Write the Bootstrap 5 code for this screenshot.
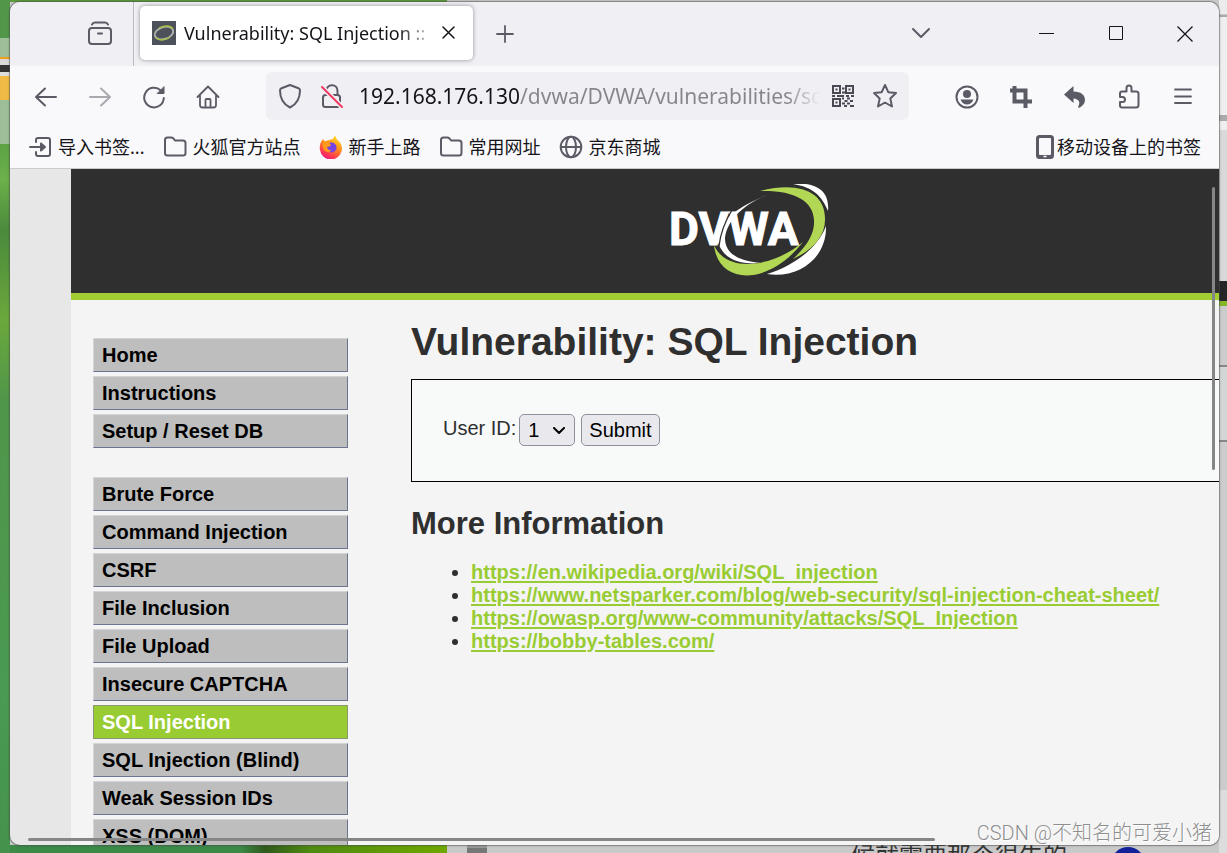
<!DOCTYPE html>
<html lang="zh-CN">
<head>
<meta charset="utf-8">
<meta name="viewport" content="width=device-width, initial-scale=1">
<title>Vulnerability: SQL Injection :: DVWA</title>
<link href="https://cdn.jsdelivr.net/npm/bootstrap@5.3.0/dist/css/bootstrap.min.css" rel="stylesheet">
<style>
:root { --ink:#5b5b66; --green:#9c3; }
body { font-family:"Noto Sans","Noto Sans CJK SC",sans-serif; color:#15141a; background:#c9c9c9; padding:2px 8px 8px 10px; }
button { color:inherit; }
svg { display:block; flex:none; }
.ico { fill:none; stroke:currentColor; stroke-width:2; stroke-linecap:round; stroke-linejoin:round; }
.tool { border:0; background:none; padding:0; display:flex; align-items:center; justify-content:center; color:var(--ink); flex:none; }
/* desktop behind the window */
.desk { inset:0; z-index:0; }
.desk-left { top:0; bottom:0; left:0; width:10px; background:linear-gradient(#52964a 0 38px,#9dbf98 38px 57px,#f0a020 57px 59px,#d8d8d8 59px 65px,#333 65px 72px,#ddd 72px 76px,#f0bb45 76px 100px,#9dbf98 100px 144px,#5da345 144px,#6bb04a 180px,#4b8a3c 230px,#6ba83c 320px,#50964a 400px,#4a9a52 700px,#45924c); }
.desk-top { top:0; left:0; width:447px; height:2px; background:#5c9b3b; }
.desk-bottom { bottom:0; left:0; width:447px; height:8px; background:linear-gradient(90deg,#3b8a48 0 240px,#2f5a1c 265px,#4f8a12 310px,#6fa800 447px); }
.desk-right { top:0; right:0; bottom:0; width:8px; background:linear-gradient(#ececec 0 14px,#aaa 15px 17px,#eee 17px 115px,#aaa 115px 121px,#eee 121px 130px,#d9d9d9 130px 281px,#262626 281px 301px,#86b52a 301px 306px,#ccc 306px 365px,#888 365px 367px,#d2d6d4 367px 440px,#888 440px 442px,#ccc 442px 790px,#ddd 790px); }
.desk-text { left:851px; top:843px; font-size:24px; line-height:24px; color:#333; white-space:nowrap; }
.desk-ball { left:1111px; top:847px; width:34px; height:34px; border-radius:50%; background:#12209a; }
.desk-chip { left:467px; top:845px; width:20px; height:8px; background:#777; border-top:3px solid #999; }
/* window */
.win { border-radius:10px; z-index:1; min-height:0; background:#e7e7e7; box-shadow:0 0 0 1px rgba(90,90,90,.45),0 0 3px rgba(0,0,0,.4); }
.tabs-row { height:64px; background:#f0eff4; }
.view-cell { width:124px; padding-left:56px; border-right:1px solid #b9b9bf; }
.tab-card { width:333px; height:54px; margin:4px 0 6px 6px; padding:0 12px; border-radius:5px; background:#fff; box-shadow:0 0 4px rgba(0,0,0,.4); }
.tab-name { font-size:18px; margin-left:8px; -webkit-mask-image:linear-gradient(90deg,#000 215px,transparent 252px); mask-image:linear-gradient(90deg,#000 215px,transparent 252px); }
.w69 { width:69px; color:#15141a; }
.nav-row { height:54px; padding:0 9px; background:#f9f9fb; }
.nav-row .tool { width:54px; }
.url-box { height:48px; margin:6px 31px 0; padding:0 3px; border-radius:6px; background:#f0eff4; }
.url-box .tool { width:42px; }
.url-box input { border:0; outline:0; padding:0; margin-left:6px; width:0; font-size:21px; height:40px; color:transparent; background:linear-gradient(90deg,#15141a 161px,#85858c 161px,#85858c calc(100% - 36px),#f0eff4 calc(100% - 2px)); -webkit-background-clip:text; background-clip:text; }
.marks { height:49px; padding:6px 18px 0 19px; gap:19px; background:#f9f9fb; border-bottom:1px solid #ccc; font-size:18px; line-height:24px; }
.marks a { color:#15141a; text-decoration:none; display:flex; align-items:center; gap:5px; white-space:nowrap; }
.marks svg { color:var(--ink); }
/* page */
.view { font-family:"Liberation Sans",Arial,sans-serif; font-size:20px; line-height:23px; color:#2f2f2f; min-height:0; }
.sheet { margin-left:61px; width:112%; min-height:100%; background:#f4f4f4; }
.banner { height:131px; padding-top:15px; background:#2f2f2f; border-bottom:7px solid #a1cc33; }
.side { width:255px; margin:38px 63px 0 22px; flex:none; }
.side ul { margin:0 0 29px; display:flex; flex-direction:column; gap:4px; }
.side a { display:block; height:34px; padding:5px 8px; border:1px solid; border-color:#d4d4d4 #6b7590 #6b7590 #d4d4d4; background:#bebebe; color:#000; font-weight:bold; line-height:22px; text-decoration:none; }
.side a.here { background:var(--green); color:#fff; border-color:#8a9a70; }
h1 { font-size:39px; line-height:44px; font-weight:bold; margin:20px 0 15px; }
h2 { font-size:31px; line-height:36px; font-weight:bold; margin:24px 0 19px; }
.query { height:103px; padding:34px 31px; background:#f8faf9; border:1px solid #000; }
.query label { padding-top:3px; }
.query select, .query button { height:32px; border:1px solid #8f8f9d; border-radius:5px; background-color:#e9e9ed; color:#000; font-size:20px; line-height:24px; padding:0 7px; }
.query select { width:56px; margin:0 6px 0 3px; padding:0 8px; appearance:none; }
.pick svg { right:14px; top:13px; pointer-events:none; }
.links { padding-left:60px; margin:0; }
.links a { color:var(--green); font-weight:bold; text-decoration-thickness:2px; text-underline-offset:2px; }
.vbar { right:4px; top:18px; width:3px; height:283px; background:#868686; border-radius:2px; }
.hbar { left:18px; bottom:4px; width:75%; height:3px; background:#868686; border-radius:2px; }
.stamp { right:7px; bottom:0; font:300 20px/24px Roboto,"Noto Sans CJK SC",sans-serif; color:#8e8e8e; text-shadow:1px 1px 0 #fff; }
</style>
</head>
<body class="vh-100 overflow-hidden position-relative d-flex flex-column">
<div class="desk position-absolute overflow-hidden" aria-hidden="true">
  <div class="desk-top position-absolute"></div>
  <div class="desk-bottom position-absolute"></div>
  <div class="desk-left position-absolute"></div>
  <div class="desk-right position-absolute"></div>
  <div class="desk-chip position-absolute"></div>
  <div class="desk-text position-absolute">候就需要那个很牛的</div>
  <div class="desk-ball position-absolute"></div>
</div>

<div class="win position-relative flex-grow-1 d-flex flex-column overflow-hidden">
  <header class="tabs-row d-flex align-items-stretch flex-shrink-0">
    <div class="view-cell d-flex align-items-center">
      <button class="tool" style="width:68px" aria-label="Firefox View"><svg class="ico" width="26" height="26" viewBox="0 0 26 26"><rect x="2" y="7" width="22" height="16" rx="3"/><path d="M5 3.500q1-2 3-2h10q2 0 3 2M11 12.500h4"/></svg></button>
    </div>
    <div class="tab-card d-flex align-items-center">
      <svg width="24" height="24" viewBox="0 0 24 24"><rect width="24" height="24" fill="#4d525a"/><g fill="none" transform="rotate(-18 12 12)"><ellipse cx="12" cy="12" rx="9.500" ry="6" stroke="#b4b8b4" stroke-width="1.800"/><path d="M9 5.800c6-1 12 1 12.500 5M3 14c2 4 8 5.500 13 4" stroke="#a5bd45" stroke-width="1.500"/></g></svg>
      <span class="tab-name flex-grow-1 text-nowrap overflow-hidden">Vulnerability: SQL Injection :: </span>
      <button class="tool" style="color:#15141a" aria-label="Close tab"><svg class="ico" width="24" height="24" viewBox="0 0 24 24"><path d="M6 6l11 11M17 6L6 17" stroke-width="1.500"/></svg></button>
    </div>
    <button class="tool ms-3" style="width:32px" aria-label="New tab"><svg class="ico" width="20" height="20" viewBox="0 0 20 20"><path d="M10 2v16M2 10h16" stroke-width="1.800"/></svg></button>
    <button class="tool w69 ms-auto" style="margin-right:57px;color:var(--ink)" aria-label="List all tabs"><svg class="ico" width="20" height="20" viewBox="0 0 20 20"><path d="M2 5l8 8 8-8"/></svg></button>
    <button class="tool w69" aria-label="Minimize"><svg width="16" height="16"><path d="M0 7.500h15" stroke="currentColor"/></svg></button>
    <button class="tool w69" aria-label="Maximize"><svg width="16" height="16"><path d="M1.500.5h13v13h-13z" fill="none" stroke="currentColor"/></svg></button>
    <button class="tool w69" aria-label="Close"><svg width="16" height="16"><path d="M.5.5l15 15M15.500.5l-15 15" stroke="currentColor" stroke-width="1.300"/></svg></button>
  </header>

  <nav class="nav-row d-flex flex-shrink-0" aria-label="Navigation">
    <button class="tool pt-2" aria-label="Back"><svg class="ico" width="24" height="24" viewBox="0 0 24 24"><path d="M22 12H2M11 3.500L2 12l9 8.500"/></svg></button>
    <button class="tool pt-2 opacity-50" aria-label="Forward"><svg class="ico" width="24" height="24" viewBox="0 0 24 24"><path d="M2 12h20M13 3.500L22 12l-9 8.500"/></svg></button>
    <button class="tool pt-2" aria-label="Reload"><svg class="ico" width="24" height="24" viewBox="0 0 24 24"><path d="M21.800 13a9.800 9.800 0 1 1-3-7.500"/><path d="M15.500 8.500h6.500V2z" fill="currentColor" stroke-width="1"/></svg></button>
    <button class="tool pt-2" aria-label="Home"><svg class="ico" width="24" height="24" viewBox="0 0 24 24"><path d="M1.500 12L12 1.500 22.500 12M4 10v10q0 2.500 2.500 2.500h11q2.500 0 2.500-2.500V10M9.500 22v-7q0-1 1-1h3q1 0 1 1v7" stroke-width="1.800"/></svg></button>
    <div class="url-box flex-grow-1 d-flex align-items-center">
      <button class="tool" aria-label="Tracking protection"><svg class="ico" width="24" height="26" viewBox="0 0 24 26"><path d="M12 2l8.500 3.200q1.500.6 1.500 2C22 15 19 21 12 24.500 5 21 2 15 2 7.200q0-1.400 1.500-2z"/></svg></button>
      <button class="tool" aria-label="Connection is not secure"><svg class="ico" width="24" height="26" viewBox="0 0 24 26"><rect x="3" y="12" width="17" height="12" rx="2.500"/><path d="M6.500 7c1-6.500 11-6.500 11 1v4"/><path d="M2 4l20 20" stroke="#f0eff4" stroke-width="5"/><path d="M2 4l20 20" stroke="#f0385f"/></svg></button>
      <input class="flex-grow-1" type="text" aria-label="Address" value="192.168.176.130/dvwa/DVWA/vulnerabilities/sqli/">
      <button class="tool" aria-label="QR code"><svg width="22" height="22" viewBox="0 0 22 22" fill="none" stroke="#4a4a55" stroke-width="2"><path d="M1 1h7v7H1zM14 1h7v7h-7zM1 14h7v7H1z"/><path d="M3.500 4.500h2M16.500 4.500h2M3.500 17.500h2M10 3.500h2.500M10 7.500h3M0 11h3M5 11h7M14 11h3M19 11h3M10 13.500h2M15 13.500h3M12.500 16h3M18 16h3M10 18.500h3M15 18.500h3M12 21h3M18 21h4"/></svg></button>
      <button class="tool" aria-label="Bookmark this page"><svg class="ico" width="26" height="26" viewBox="0 0 26 26"><path d="M13 2l3.300 7.200 7.700.9-5.700 5.300 1.700 8.100-7-4-7 4 1.700-8.100L2 10.100l7.700-.9z"/></svg></button>
    </div>
    <button class="tool pt-2" aria-label="Account"><svg class="ico" width="24" height="24" viewBox="0 0 24 24"><circle cx="12" cy="12" r="10.500"/><circle cx="12" cy="9" r="4" fill="currentColor" stroke="none"/><path d="M5.500 14.500h13q-2 5-6.500 5t-6.500-5z" fill="currentColor" stroke="none"/></svg></button>
    <button class="tool pt-2" aria-label="Screenshot"><svg width="24" height="24" viewBox="0 0 24 24" fill="none" stroke="currentColor" stroke-width="4"><path d="M5.500 1v15.500H23M1 5.500h15.500V23"/></svg></button>
    <button class="tool pt-2" aria-label="Undo"><svg width="24" height="24" viewBox="0 0 24 24" fill="currentColor"><path d="M1 9.500L10.500 1v5.500C18 6.500 22 10 22 15q0 4-5 7.500-2 .500-2-.500 4-7.500-4.500-8.500V18z"/></svg></button>
    <button class="tool pt-2" aria-label="Extensions"><svg class="ico" width="24" height="26" viewBox="0 0 24 26"><path d="M3 9.500q0-2 2-2h4.500V4a2.500 2.500 0 0 1 5 0v3.500H19q2.500 0 2.500 2V21q0 2.500-2.500 2.500H5q-2 0-2-2V18h2.500a2.500 2.500 0 0 0 0-5H3z"/></svg></button>
    <button class="tool pt-2" aria-label="Menu"><svg class="ico" width="20" height="20" viewBox="0 0 20 20"><path d="M2 2.500h16M2 9.500h16M2 16h16" stroke-width="1.800"/></svg></button>
  </nav>

  <nav class="marks d-flex align-items-center flex-shrink-0" aria-label="Bookmarks">
    <a href="#"><svg class="ico" width="24" height="24" viewBox="0 0 24 24"><path d="M7 7V5q0-2 2-2h10q2 0 2 2v14q0 2-2 2H9q-2 0-2-2v-2M1 12h13"/><path d="M12 8.500l4 3.500-4 3.500z" fill="currentColor"/></svg>导入书签...</a>
    <a href="#"><svg class="ico" width="24" height="24" viewBox="0 0 24 24"><path d="M2 5q0-2.500 2.500-2.500H8q1.500 0 2.500 1L12 5.500h8q2.500 0 2.500 2.500v10q0 2.500-2.500 2.500H4.500Q2 20.500 2 18z"/></svg>火狐官方站点</a>
    <a href="#"><svg width="24" height="24" viewBox="0 0 24 24"><defs><linearGradient id="fx" x1=".8" y1="0" x2=".3" y2="1"><stop offset="0" stop-color="#ffe226"/><stop offset=".45" stop-color="#ff8a1c"/><stop offset=".8" stop-color="#ff3950"/><stop offset="1" stop-color="#e31587"/></linearGradient></defs><path d="M2.500 6l2-2 1 2.500L10 5l4-1q1-2.500 2-3.500 1 4 5 7 3 4 1.500 9A11 11 0 0 1 1 15q-1-5 1.500-9z" fill="url(#fx)"/><circle cx="12.500" cy="12.500" r="5" fill="#7542e5"/><path d="M4 7q5-2 8 3-1 2-4 2 1 4 5 3-4 4-8 0-2-4-1-8z" fill="#ff9b1c"/></svg>新手上路</a>
    <a href="#"><svg class="ico" width="24" height="24" viewBox="0 0 24 24"><path d="M2 5q0-2.500 2.500-2.500H8q1.500 0 2.500 1L12 5.500h8q2.500 0 2.500 2.500v10q0 2.500-2.500 2.500H4.500Q2 20.500 2 18z"/></svg>常用网址</a>
    <a href="#"><svg class="ico" width="24" height="24" viewBox="0 0 24 24"><circle cx="12" cy="12" r="10.300"/><ellipse cx="12" cy="12" rx="5" ry="10.300"/><path d="M2 12h20"/></svg>京东商城</a>
    <a href="#" class="ms-auto" style="gap:3px"><svg width="18" height="24" viewBox="0 0 18 24"><rect width="18" height="24" rx="3.500" fill="currentColor"/><rect x="3" y="3" width="12" height="17" rx="1" fill="#f9f9fb"/><path d="M7.500 21.500h3" stroke="#f9f9fb" stroke-width="1.500"/></svg>移动设备上的书签</a>
  </nav>

  <div class="view position-relative flex-grow-1 overflow-hidden">
    <div class="sheet">
      <div class="banner d-flex justify-content-center align-items-start">
        <svg width="166" height="92" viewBox="-4 0 166 92" role="img" aria-label="DVWA">
          <path d="M91 7C130-3 157 8 156 36c0 16-12 30-32 39 14-13 22-26 21-39C144 16 124 6 91 7z" fill="#b2d754"/>
          <path d="M124 0c22-2 37 6 35 27C153 12 144 3 124 0z" fill="#fff"/>
          <path d="M157 42c1 34-30 53-59 48C127 81 149 63 157 42z" fill="#fff"/>
          <path d="M103 9C60 26 42 44 50 61c6 14 20 20 42 18C70 77 56 70 56 54 58 36 75 19 103 9z" fill="#fff"/>
          <path d="M45 61c4 40 54 42 89-3C106 82 58 91 45 61z" fill="#b2d754"/>
          <text x="0" y="61" font-family="Roboto,sans-serif" font-weight="700" font-size="46" fill="#fff" stroke="#fff">DVWA</text>
          <path d="M50 62Q52 44 63 26" fill="none" stroke="#2f2f2f" stroke-width="1.300"/>
        </svg>
      </div>
      <div class="d-flex">
        <nav class="side" aria-label="DVWA">
          <ul class="list-unstyled">
            <li><a href="#">Home</a></li>
            <li><a href="#">Instructions</a></li>
            <li><a href="#">Setup / Reset DB</a></li>
          </ul>
          <ul class="list-unstyled">
            <li><a href="#">Brute Force</a></li>
            <li><a href="#">Command Injection</a></li>
            <li><a href="#">CSRF</a></li>
            <li><a href="#">File Inclusion</a></li>
            <li><a href="#">File Upload</a></li>
            <li><a href="#">Insecure CAPTCHA</a></li>
            <li><a href="#" class="here">SQL Injection</a></li>
            <li><a href="#">SQL Injection (Blind)</a></li>
            <li><a href="#">Weak Session IDs</a></li>
            <li><a href="#">XSS (DOM)</a></li>
          </ul>
        </nav>
        <main class="flex-grow-1">
          <h1>Vulnerability: SQL Injection</h1>
          <form class="query d-flex align-items-start">
            <label for="uid">User ID:</label>
            <span class="pick position-relative"><select id="uid"><option>1</option><option>2</option><option>3</option></select><svg class="ico position-absolute" width="16" height="10" viewBox="0 0 16 10" style="color:#000"><path d="M3 1l5 5 5-5"/></svg></span>
            <button type="button">Submit</button>
          </form>
          <h2>More Information</h2>
          <ul class="links">
            <li><a href="#">https://en.wikipedia.org/wiki/SQL_injection</a></li>
            <li><a href="#">https://www.netsparker.com/blog/web-security/sql-injection-cheat-sheet/</a></li>
            <li><a href="#">https://owasp.org/www-community/attacks/SQL_Injection</a></li>
            <li><a href="#">https://bobby-tables.com/</a></li>
          </ul>
        </main>
      </div>
    </div>
    <div class="vbar position-absolute"></div>
    <div class="hbar position-absolute"></div>
    <div class="stamp position-absolute text-nowrap">CSDN @不知名的可爱小猪</div>
  </div>
</div>
<script src="https://cdn.jsdelivr.net/npm/bootstrap@5.3.0/dist/js/bootstrap.bundle.min.js"></script>
</body>
</html>
